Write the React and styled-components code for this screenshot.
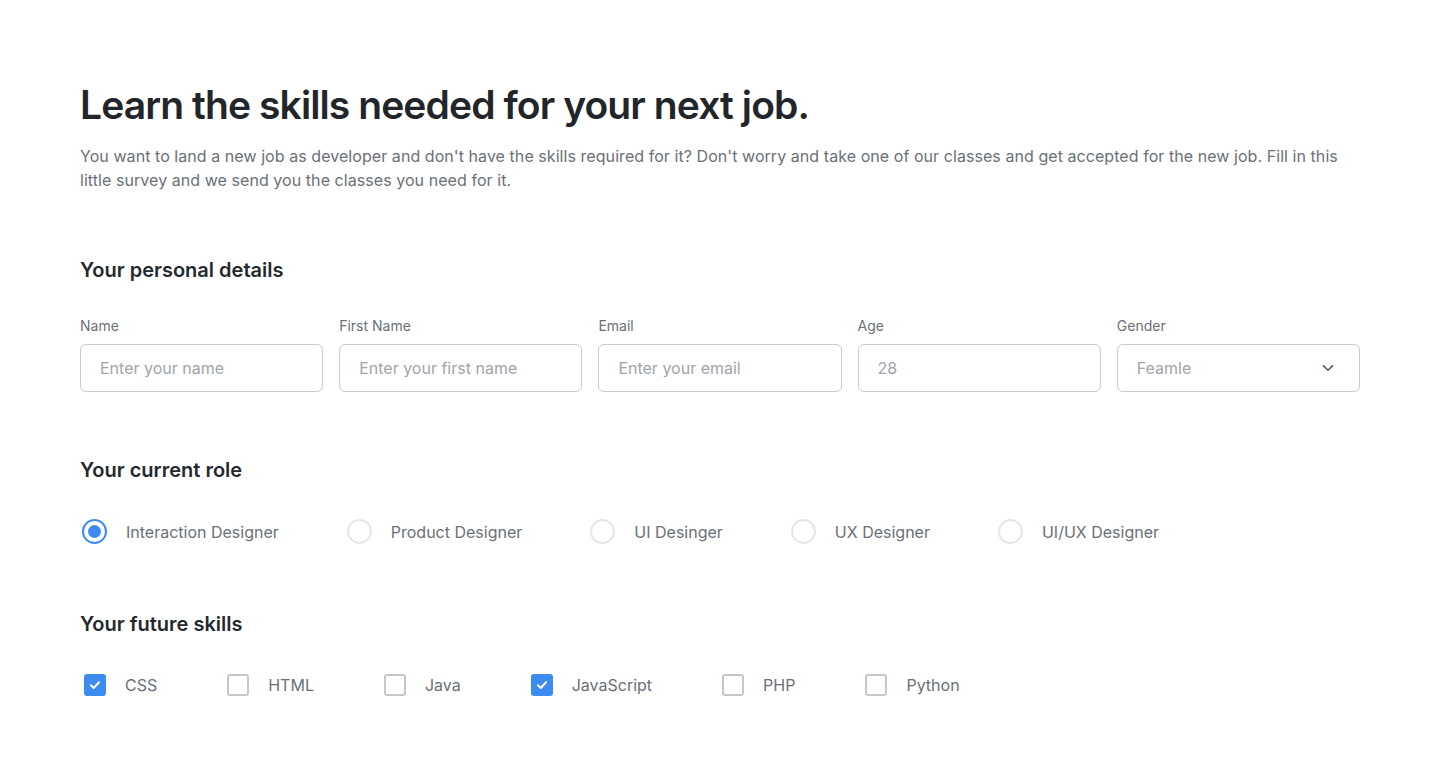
import React, { useState } from 'react';
import styled, { createGlobalStyle } from 'styled-components';
import { ChevronDown } from 'lucide-react';

const GlobalStyle = createGlobalStyle`
  body {
    margin: 0;
    background: #ffffff;
    font-family: Inter, "Noto Sans", "Liberation Sans", sans-serif;
  }
  * { box-sizing: border-box; }
`;

const roles = ['Interaction Designer', 'Product Designer', 'UI Desinger', 'UX Designer', 'UI/UX Designer'];
const skills = ['CSS', 'HTML', 'Java', 'JavaScript', 'PHP', 'Python'];

const fields = [
  { label: 'Name', placeholder: 'Enter your name' },
  { label: 'First Name', placeholder: 'Enter your first name' },
  { label: 'Email', placeholder: 'Enter your email' },
  { label: 'Age', placeholder: '28' },
];

const App = () => {
  const [role, setRole] = useState('Interaction Designer');
  const [checked, setChecked] = useState({ CSS: true, JavaScript: true });

  const toggle = (skill) => setChecked((prev) => ({ ...prev, [skill]: !prev[skill] }));

  return (
    <Page>
      <GlobalStyle />
      <Title>Learn the skills needed for your next job.</Title>
      <Intro>
        You want to land a new job as developer and don't have the skills required for it? Don't worry and take one
        of our classes and get accepted for the new job. Fill in this little survey and we send you the classes you
        need for it.
      </Intro>

      <Section>
        <SectionTitle>Your personal details</SectionTitle>
        <FieldGrid>
          {fields.map((f) => (
            <Field key={f.label}>
              <Label>{f.label}</Label>
              <Input placeholder={f.placeholder} />
            </Field>
          ))}
          <Field>
            <Label>Gender</Label>
            <SelectBox>
              <span>Feamle</span>
              <ChevronDown size={18} strokeWidth={2.2} color="#4b5563" />
            </SelectBox>
          </Field>
        </FieldGrid>
      </Section>

      <Section>
        <SectionTitle>Your current role</SectionTitle>
        <OptionRow>
          {roles.map((r) => (
            <Option key={r} onClick={() => setRole(r)}>
              <Radio $active={role === r} />
              <OptionLabel>{r}</OptionLabel>
            </Option>
          ))}
        </OptionRow>
      </Section>

      <Section $top={66}>
        <SectionTitle>Your future skills</SectionTitle>
        <OptionRow>
          {skills.map((s) => (
            <Option key={s} onClick={() => toggle(s)}>
              <Checkbox $active={!!checked[s]}>
                {checked[s] && (
                  <svg width="14" height="14" viewBox="0 0 14 14" fill="none">
                    <path d="M3 7.3l2.7 2.7L11 4.3" stroke="#fff" strokeWidth="2" strokeLinecap="round" strokeLinejoin="round" />
                  </svg>
                )}
              </Checkbox>
              <OptionLabel>{s}</OptionLabel>
            </Option>
          ))}
        </OptionRow>
      </Section>
    </Page>
  );
};

export default App;

const Page = styled.main`
  padding: 81px 80px 40px;
  width: 1440px;
`;

const Title = styled.h1`
  margin: 0;
  font-size: 39px;
  line-height: 48px;
  font-weight: 600;
  letter-spacing: -0.9px;
  color: #22262a;
`;

const Intro = styled.p`
  margin: 15px 0 0;
  font-size: 16px;
  line-height: 24px;
  letter-spacing: 0.06px;
  color: #6b7078;
  max-width: 1275px;
`;

const Section = styled.section`
  margin-top: ${(p) => p.$top || 64}px;
`;

const SectionTitle = styled.h2`
  margin: 0 0 32px;
  font-size: 20px;
  line-height: 28px;
  font-weight: 600;
  color: #25292e;
`;

const FieldGrid = styled.div`
  display: grid;
  grid-template-columns: repeat(5, minmax(0, 1fr));
  gap: 16px;
`;

const Field = styled.label`
  display: flex;
  flex-direction: column;
  gap: 8px;
  min-width: 0;
`;

const Label = styled.span`
  font-size: 14px;
  line-height: 20px;
  color: #6b7078;
`;

const Input = styled.input`
  width: 100%;
  min-width: 0;
  height: 48px;
  border: 1px solid #c9ccd1;
  border-radius: 6px;
  padding: 0 19px;
  font-family: inherit;
  font-size: 16px;
  color: #374151;
  outline: none;
  &::placeholder {
    color: #a0a4ab;
  }
`;

const SelectBox = styled.div`
  height: 48px;
  border: 1px solid #c9ccd1;
  border-radius: 6px;
  padding: 0 22px 0 19px;
  display: flex;
  align-items: center;
  justify-content: space-between;
  font-size: 16px;
  color: #a0a4ab;
`;

const OptionRow = styled.div`
  display: flex;
  align-items: center;
  gap: 68px;
  margin-top: 35px;
  padding-left: 2px;
`;

const Option = styled.div`
  display: flex;
  align-items: center;
  gap: 19px;
  cursor: pointer;
`;

const OptionLabel = styled.span`
  font-size: 16px;
  line-height: 24px;
  color: #6b7078;
`;

const Radio = styled.span`
  width: 25px;
  height: 25px;
  border-radius: 50%;
  border: 2px solid ${(p) => (p.$active ? '#3b8bf0' : '#e4e6e9')};
  display: flex;
  align-items: center;
  justify-content: center;
  &::after {
    content: '';
    width: 13px;
    height: 13px;
    border-radius: 50%;
    background: #3b8bf0;
    display: ${(p) => (p.$active ? 'block' : 'none')};
  }
`;

const Checkbox = styled.span`
  width: 22px;
  height: 22px;
  margin-left: 2px;
  border-radius: 3px;
  border: 2px solid ${(p) => (p.$active ? '#3b8bf0' : '#c4c7cc')};
  background: ${(p) => (p.$active ? '#3b8bf0' : '#fff')};
  display: flex;
  align-items: center;
  justify-content: center;
`;
